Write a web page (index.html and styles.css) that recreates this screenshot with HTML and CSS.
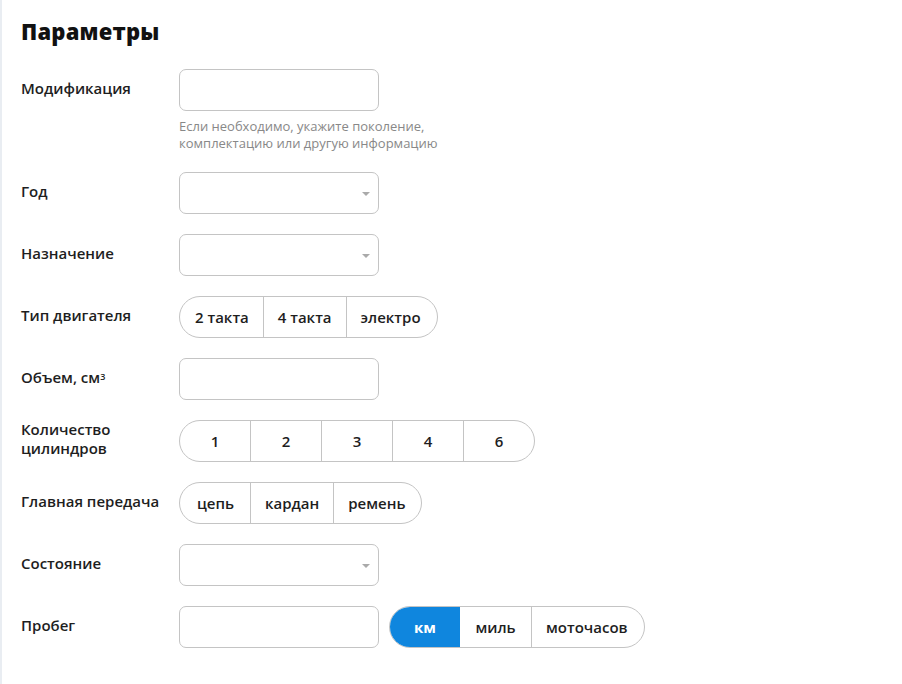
FILE: index.html
```html
<!DOCTYPE html>
<html lang="ru">
<head>
<meta charset="utf-8">
<title>Параметры</title>
<link rel="stylesheet" href="styles.css">
</head>
<body>
<div class="page">
  <h1 class="title">Параметры</h1>
  <div class="form">
    <div class="row">
      <div class="label">Модификация</div>
      <div class="control">
        <div class="input"></div>
        <div class="hint">Если необходимо, укажите поколение,<br>комплектацию или другую информацию</div>
      </div>
    </div>
    <div class="row">
      <div class="label">Год</div>
      <div class="control"><div class="input select"><span class="arrow"></span></div></div>
    </div>
    <div class="row">
      <div class="label">Назначение</div>
      <div class="control"><div class="input select"><span class="arrow"></span></div></div>
    </div>
    <div class="row">
      <div class="label">Тип двигателя</div>
      <div class="control">
        <div class="seg">
          <span class="opt">2 такта</span><span class="opt">4 такта</span><span class="opt">электро</span>
        </div>
      </div>
    </div>
    <div class="row">
      <div class="label">Объем, см<sup>3</sup></div>
      <div class="control"><div class="input"></div></div>
    </div>
    <div class="row">
      <div class="label">Количество<br>цилиндров</div>
      <div class="control">
        <div class="seg">
          <span class="opt fixed">1</span><span class="opt fixed">2</span><span class="opt fixed">3</span><span class="opt fixed">4</span><span class="opt fixed">6</span>
        </div>
      </div>
    </div>
    <div class="row">
      <div class="label">Главная передача</div>
      <div class="control">
        <div class="seg">
          <span class="opt">цепь</span><span class="opt">кардан</span><span class="opt">ремень</span>
        </div>
      </div>
    </div>
    <div class="row">
      <div class="label">Состояние</div>
      <div class="control"><div class="input select"><span class="arrow"></span></div></div>
    </div>
    <div class="row">
      <div class="label">Пробег</div>
      <div class="control inline">
        <div class="input"></div>
        <div class="seg">
          <span class="opt fixed active">км</span><span class="opt fixed">миль</span><span class="opt">моточасов</span>
        </div>
      </div>
    </div>
  </div>
</div>
</body>
</html>
```
FILE: styles.css
```css
html, body {
  margin: 0;
  padding: 0;
  background: #fff;
}
body {
  font-family: "Open Sans", "Noto Sans", sans-serif;
  color: #222;
}
.page {
  min-height: 684px;
  box-sizing: border-box;
  border-left: 2px solid #e9edf2;
  padding: 16px 20px 0 19px;
}
.title {
  margin: 0 0 23px;
  font-size: 22px;
  line-height: 30px;
  font-weight: 800;
  color: #111;
  letter-spacing: 0.2px;
}
.form {
  display: flex;
  flex-direction: column;
  gap: 20px;
}
.row {
  display: flex;
  align-items: flex-start;
}
.label {
  width: 158px;
  flex: none;
  min-height: 42px;
  display: flex;
  align-items: center;
  font-size: 15px;
  line-height: 19px;
  font-weight: 600;
  color: #1e1e1e;
  padding-bottom: 4px;
  box-sizing: border-box;
}
.label sup {
  font-size: 9px;
  line-height: 0;
  vertical-align: 7px;
}
.control {
  display: flex;
  flex-direction: column;
}
.control.inline {
  flex-direction: row;
  gap: 10px;
}
.input {
  position: relative;
  width: 200px;
  height: 42px;
  box-sizing: border-box;
  border: 1px solid #c4c4c4;
  border-radius: 7px;
  background: #fff;
}
.arrow {
  position: absolute;
  right: 8px;
  top: 19px;
  width: 0;
  height: 0;
  border-left: 4px solid transparent;
  border-right: 4px solid transparent;
  border-top: 4px solid #aaa;
}
.hint {
  margin-top: 7px;
  font-size: 13px;
  line-height: 17px;
  color: #888;
}
.seg {
  display: inline-flex;
  height: 42px;
  box-sizing: border-box;
  border: 1px solid #c4c4c4;
  border-radius: 21px;
  overflow: hidden;
  align-self: flex-start;
}
.opt {
  display: flex;
  align-items: center;
  justify-content: center;
  padding: 0 14px 1px;
  min-width: 70px;
  box-sizing: border-box;
  font-size: 15px;
  font-weight: 600;
  color: #1e1e1e;
  border-left: 1px solid #c4c4c4;
}
.opt:first-child {
  border-left: none;
  padding-left: 15px;
}
.opt:last-child {
  padding-right: 16px;
}
.opt.fixed {
  width: 71px;
  padding: 0 0 1px;
}
.opt.fixed:first-child {
  width: 70px;
}
.opt.active {
  background: #0f86de;
  color: #fff;
  font-weight: 700;
}
.opt.active + .opt {
  border-left: none;
}
```
